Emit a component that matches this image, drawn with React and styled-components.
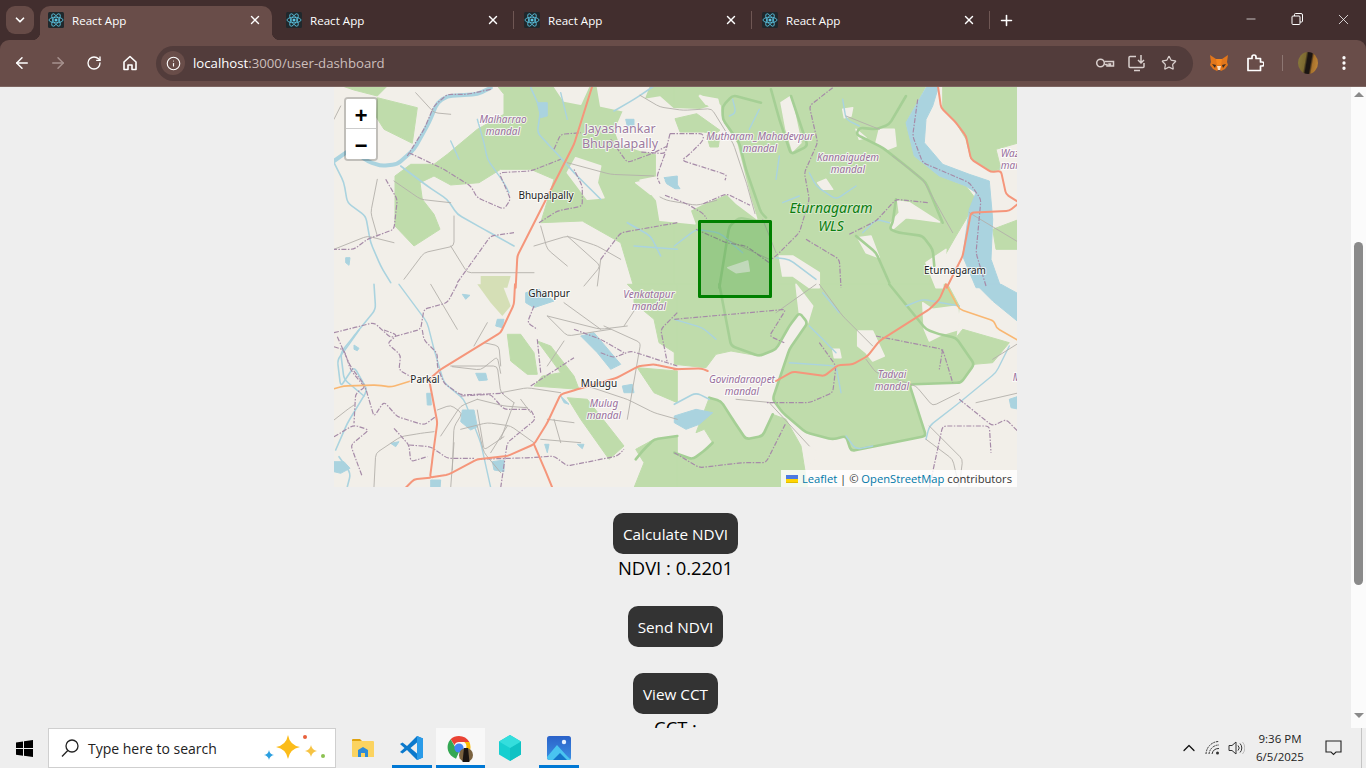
import React from "react";
import styled, { createGlobalStyle } from "styled-components";
import { ArrowLeft, ArrowRight, RotateCw, Info, Star, X, Plus, Minus, ChevronDown, ChevronUp, EllipsisVertical } from "lucide-react";

const GlobalStyle = createGlobalStyle`
  html, body { margin: 0; height: 100%; overflow: hidden; }
  * { box-sizing: border-box; }
`;

const UI_FONT = `"Open Sans", "Noto Sans", sans-serif`;

/* ---------- map data, traced from crops of the map at 3x ---------- */
const NW = [334, 86];
const NE = [676, 86];
const SW = [334, 286];
const SE = [676, 286];
const MID = [640, 87];
const LOW = [334, 330];

const pts = (o, s) =>
  s.trim().split(/\s+/).map((p) => {
    const [x, y] = p.split(",").map(Number);
    return [o[0] + x / 3, o[1] + y / 3];
  });
const poly = (o, s) => "M" + pts(o, s).map((p) => p[0].toFixed(1) + " " + p[1].toFixed(1)).join("L") + "Z";

// polyline with its corners rounded off by a few pixels
const curve = (o, s, r = 4) => {
  const a = pts(o, s);
  const toward = (p, q) => {
    const len = Math.hypot(q[0] - p[0], q[1] - p[1]) || 1;
    const t = Math.min(r, len / 2) / len;
    return [p[0] + (q[0] - p[0]) * t, p[1] + (q[1] - p[1]) * t];
  };
  let d = `M${a[0][0].toFixed(1)} ${a[0][1].toFixed(1)}`;
  for (let i = 1; i < a.length - 1; i++) {
    const b = toward(a[i], a[i - 1]);
    const c = toward(a[i], a[i + 1]);
    d += `L${b[0].toFixed(1)} ${b[1].toFixed(1)}Q${a[i][0].toFixed(1)} ${a[i][1].toFixed(1)} ${c[0].toFixed(1)} ${c[1].toFixed(1)}`;
  }
  const e = a[a.length - 1];
  return d + `L${e[0].toFixed(1)} ${e[1].toFixed(1)}`;
};

const forests = [
  [NW, "130,35 250,65 235,172 150,130 128,95"],
  [NW, "25,0 160,0 130,30 60,12"],
  [NW, "183,270 183,420 240,480 318,430 300,385 265,340 258,290 300,270 350,297 435,290 500,250 590,250 660,280 620,410 745,405 860,470 900,605 1030,605 1030,0 490,0 510,25 510,85 430,130 340,205 300,235 230,235"],
  [NE, "-5,0 750,0 690,110 715,210 790,270 870,300 900,340 870,400 840,450 800,520 790,605 -5,605"],
  [NE, "800,0 1030,0 1030,170 960,190 975,250 945,255 885,220 870,160 840,110 800,70"],
  [NE, "950,430 1030,400 1030,490 960,490"],
  [SE, "-5,-5 815,-5 850,60 840,155 895,235 855,290 700,295 750,450 525,495 510,450 470,460 390,440 320,380 290,340 340,190 395,110 370,80 340,120 300,190 250,210 165,195 120,205 90,245 -5,235"],
  [SE, "840,155 860,130 1000,170 950,230 895,235"],
  [SE, "100,335 135,345 170,400 210,460 260,450 290,385 330,400 375,480 395,605 -5,605 -5,500 50,520 90,490 110,470 85,430 60,440"],
  [SW, "880,-5 1030,-5 1030,205 975,170 960,100 900,50 900,15"],
  [SW, "910,245 1030,255 1030,350 960,320"],
  [SW, "905,490 960,460 1030,450 1030,605 900,605 930,530"],
  [SW, "520,145 560,145 600,200 610,265 580,265 530,225"],
  [SW, "610,165 650,180 720,270 735,310 600,300 625,270 680,260"],
  [SW, "700,335 760,340 870,480 825,520 740,400"],
];

const clearings = [
  [NW, "660,0 765,0 740,55 690,45"],
  [NW, "790,0 945,0 930,40 870,75 800,60"],
  [NW, "725,215 800,240 790,290 810,335 760,340 700,260"],
  [NW, "905,290 960,280 1030,310 1030,322 950,325"],
  [MID, "-75,130 -40,50 0,40 60,30 100,65 180,68 210,60 180,25 240,55 245,100 290,170 300,210 330,330 350,395 290,350 260,320 190,350 150,370 165,410 60,400 50,340 0,280 50,270 50,200 0,190 -60,170"],
  [NE, "70,30 125,40 130,60 90,55"],
  [NE, "315,50 345,30 375,170 350,195 330,130"],
  [NE, "500,70 530,65 525,90 505,95"],
  [NE, "425,290 450,280 470,310 440,310"],
  [NE, "540,130 570,155 550,160"],
  [NE, "610,130 655,130 660,180 635,190 600,170"],
  [NE, "665,345 700,350 790,408 730,400 690,395 650,430 645,410 670,380"],
  [NE, "545,455 585,450 610,515 570,500"],
  [NE, "310,510 350,510 430,560 430,605 400,605 350,570 320,570"],
  [NE, "750,530 810,490 800,605 780,605"],
  [NE, "155,545 215,525 220,555 180,560"],
  [SE, "360,-5 410,60 395,110 370,80 365,40"],
  [SE, "545,135 590,135 625,210 590,225 570,200 545,180"],
  [SE, "740,50 770,70 845,60 850,130 800,145 760,165 745,130"],
  [SE, "470,190 490,190 495,215 475,215"],
  [SE, "400,480 420,490 415,540 395,530"],
];

const groves = [
  [MID, "105,95 170,80 240,130 225,140 190,135 120,135"],
  [MID, "200,145 240,145 235,180 210,180"],
];

const meadows = [
  [SW, "430,-5 505,-5 530,60 505,90 470,50"],
  [NW, "440,570 530,570 520,605 440,605"],
];

const lakes = [
  [NE, "750,5 765,-5 790,-5 770,60 750,100 745,170 800,235 880,265 940,285 950,400 945,520 975,605 900,605 860,510 880,370 900,320 870,300 790,270 715,210 690,110"],
  [SE, "900,-5 975,-5 1030,25 1030,110 950,45"],
  [SE, "1000,340 1030,330 1030,370 1005,365"],
  [SE, "-5,390 60,370 110,380 70,415 30,430 -5,410"],
  [SW, "575,20 615,10 660,45 600,65 575,50"],
  [SW, "740,150 780,140 860,235 830,250 790,200"],
  [SW, "865,300 895,295 900,320 870,320"],
  [SW, "680,330 705,355 690,350"],
  [SW, "490,100 510,100 505,125 485,120"],
  [SW, "385,25 408,28 395,40"],
  [SW, "730,475 750,475 745,488"],
  [SW, "632,475 645,475 640,500"],
  [NW, "610,50 640,50 640,90 620,95"],
  [NW, "875,100 900,100 900,120 880,120"],
  [NW, "990,275 1030,270 1030,295 1000,290"],
  [NW, "35,515 48,515 45,538 35,530"],
  [MID, "75,280 100,275 120,305 105,305 80,290"],
  [LOW, "60,45 75,55 70,62 60,58"],
  [LOW, "0,395 30,395 48,415 20,430 0,425"],
  [LOW, "385,240 420,240 430,290 410,300 380,275"],
  [LOW, "425,130 455,130 460,150 435,152"],
  [LOW, "278,190 290,190 292,225 280,225"],
  [LOW, "475,395 510,390 510,425 480,420"],
  [LOW, "290,450 320,450 318,475 290,475"],
  [LOW, "170,340 195,335 185,350"],
];

const rivers = [
  [NW, "470,5 430,25 340,30 310,50 285,110 240,190 190,235 140,240 100,225 50,190 0,225", 4],
  [NW, "0,230 30,290 40,350 95,390 110,470 140,540 170,590", 1.6],
  [NW, "200,240 280,300 340,340 370,385 450,430 540,480", 1.6],
  [NW, "590,5 620,70 610,140 680,215 720,260 760,300 800,340", 1.6],
  [NW, "430,100 450,170 460,220 510,290 525,320", 1.4],
  [NW, "880,410 950,450 980,510", 1.6],
  [NW, "900,480 1030,490", 1.4],
  [NW, "680,20 700,100", 1.4],
  [NW, "840,75 900,40 960,0", 1.6],
  [NW, "350,165 375,220", 1.4],
  [SW, "120,-5 125,70 60,150 20,200 30,280 90,330", 1.6],
  [SW, "195,-5 280,110 300,190 330,290 390,340 440,470 470,605", 1.4],
  [LOW, "75,0 40,50 10,90 20,170 60,110 100,180 40,280 5,360", 1.6],
  [LOW, "15,380 50,430 40,470", 1.6],
  [NE, "-5,480 60,430 130,440 200,500", 1.4],
  [NE, "300,515 340,520 420,580", 1.6],
  [NE, "170,40 180,80 160,90", 1.4],
  [NE, "250,70 220,130", 1.4],
  [NE, "310,210 300,280", 1.4],
  [NE, "400,260 420,300 480,340 540,300", 1.4],
  [NE, "370,330 320,350", 1.4],
  [NE, "500,40 510,100 550,120", 1.4],
  [NE, "640,410 600,400 560,440", 1.4],
  [SE, "-5,100 80,125 120,160", 1.4],
  [SE, "400,120 450,170 480,200", 1.4],
  [SE, "340,230 480,240 495,320", 1.4],
  [SE, "440,20 490,80", 1.4],
  [SE, "850,60 740,40 690,60", 1.4],
  [SE, "100,340 60,320 -5,355", 1.6],
  [SE, "1000,180 960,260 850,350 760,420 750,460", 1.4],
  [SE, "510,450 540,490 590,480", 1.4],
];

const minorRoads = [
  [SW, "290,-5 370,130"], [SW, "460,110 420,180"], [SW, "350,240 490,240 500,320 540,350"],
  [SW, "640,90 800,130 880,120"], [SW, "690,50 800,130"], [SW, "500,320 580,305 680,320"],
  [SW, "380,430 460,410 530,420 600,470"], [SW, "320,450 380,360 430,340"],
  [SW, "620,460 740,470"], [SW, "640,400 720,410"], [SW, "810,120 920,170 880,400"],
  [SW, "640,90 700,150 830,130"], [SW, "690,165 640,240"], [SW, "870,120 910,60"],
  [SW, "430,340 510,360 580,365"], [SW, "500,240 495,180 450,170"], [SW, "520,420 470,500"],
  [SW, "560,340 590,380"], [SW, "660,400 680,470"], [SW, "760,300 880,340 960,380 1030,400"],
  [SW, "430,420 450,500 500,560"], [SW, "360,470 350,605"], [SW, "540,350 500,460"],
  [NW, "180,285 260,340 350,350"], [NW, "210,580 270,500 360,480 360,390"], [NW, "0,490 100,450 180,470"],
  [NW, "600,480 700,450 790,480 860,520"], [NW, "620,420 640,490 700,540"], [NW, "700,230 830,265 960,270"],
  [NW, "130,280 110,380 130,450"], [NW, "800,520 790,600"], [NW, "0,100 20,60"],
  [NW, "350,480 400,560 600,560"], [NW, "700,450 800,540 750,600"], [NW, "245,20 300,80 350,85"],
  [LOW, "0,270 45,235 60,225"], [LOW, "120,470 125,370 200,320 260,310 300,305"],
  [LOW, "355,110 440,120 490,80 500,130"], [LOW, "310,240 350,225 385,250 360,290 355,420"],
  [LOW, "430,240 440,300 450,360 510,320"],
  [MID, "0,25 60,60 130,70 215,65 280,170 320,290 345,380"], [MID, "60,330 80,340 170,355 230,340"],
  [NE, "510,90 610,130"], [NE, "650,210 740,280 830,440"],
  [NE, "260,400 300,500"], [NE, "150,460 280,520"], [NE, "880,380 1030,470"],
  [SE, "430,-5 500,90 590,180"], [SE, "570,220 600,260 720,300 770,360 850,320"], [SE, "280,350 400,480"],
  [SE, "180,340 290,350"], [SE, "1030,170 950,220"], [SE, "750,460 830,520 850,605"],
  [SE, "420,-5 300,80"], [SE, "900,350 1030,320"], [SE, "760,420 860,520 850,600"],
];

const boundaries = [
  [NW, "470,10 400,25 340,25 300,60 270,130 220,210"],
  [NW, "225,200 330,250 410,300 430,335 510,370 530,340 495,260 590,255 680,220"],
  [NW, "155,280 190,340 180,430 100,460 60,490 0,490"],
  [NW, "660,190 680,145 740,140"],
  [NW, "615,410 670,375 745,360 745,300 720,250"],
  [NW, "800,520 860,440 1030,410"],
  [NW, "370,590 470,450 540,440"],
  [NW, "830,160 880,230 960,200 1000,180"],
  [SW, "0,140 60,125 120,110 170,155 260,130 270,70 340,50 370,-5"],
  [SW, "380,330 470,325 510,370 590,370 605,400 520,470 500,605"],
  [SW, "430,520 590,515 660,510 700,540 850,510 870,490"],
  [SW, "600,60 580,110 610,130"],
  [SW, "610,160 620,260"],
  [SW, "800,200 840,215 890,195 1030,240"],
  [SW, "1030,80 980,130 1000,230"],
  [SW, "720,130 800,160 870,200"],
  [SW, "590,300 720,215"],
  [LOW, "10,20 50,110 95,170 65,190 60,280"],
  [LOW, "0,50 30,60 50,120 95,175 120,260 150,215 190,260 270,285 305,260"],
  [LOW, "150,0 190,15 160,40 200,75 195,120 230,140"],
  [LOW, "265,0 270,30 310,70 310,110 330,160 380,195 510,190"],
  [LOW, "0,320 60,285 105,300 50,345 85,440"],
  [LOW, "180,295 225,345 230,395 280,380"],
  [LOW, "225,345 290,350 340,385 420,385"],
  [MID, "90,140 190,140 190,160 150,200 125,220 250,260 260,265 255,280"],
  [MID, "90,140 75,200 0,195"],
  [MID, "75,200 50,270 60,290"],
  [MID, "75,325 140,350 190,380 200,395"],
  [MID, "190,350 260,320 330,355"],
  [NE, "470,5 400,60 425,170 385,260 400,340 370,440 300,510 285,520"],
  [NE, "390,460 490,520 495,605"],
  [NE, "520,445 600,405 660,340 760,350"],
  [NE, "60,430 150,470 210,480 280,530"],
  [NE, "725,40 710,150 740,230 880,290 915,340 900,500 930,600"],
  [SE, "-5,100 330,70 280,150 325,170"],
  [SE, "430,170 480,240 470,320 400,350 270,350"],
  [SE, "600,150 800,190 830,290"],
  [SE, "800,190 790,250"],
  [SE, "-5,500 70,545 200,530 270,530 330,410"],
  [SE, "760,605 800,420 940,420 945,500"],
  [SE, "850,340 950,420 990,400 1030,440"],
];

const reserveEdges = [
  [NE, "255,50 170,28 140,60 140,100 190,170 210,250 255,380 270,395"],
  [NE, "285,10 310,100 345,205 395,180 345,30"],
  [NE, "690,30 640,115 600,130 550,125 540,145 570,160 620,185 690,240 750,290 800,410"],
  [NE, "660,340 650,410 640,430 670,440 740,450 770,490 775,540"],
  [NE, "540,450 600,500 640,590"],
  [NE, "130,605 160,420 190,395 240,405"],
  [SE, "130,-5 165,180 250,210 300,190 340,120 370,80 395,110 340,190 290,340 320,380 390,440 470,460 510,450 525,495 750,450 700,295 855,290 895,235 840,155 790,145 750,130 640,-5"],
  [SE, "100,335 135,345 170,400 210,460 260,450 290,385"],
  [SE, "-5,500 50,520 90,490 110,470"],
  [SW, "905,520 930,490 960,460 1030,450"],
];

const highways = [
  [NW, "775,0 720,175 550,510 545,605"],
  [SW, "543,-5 540,55 500,140 320,250 285,280 310,410 295,520 288,575 345,565 430,520 520,510 600,475 640,410 680,325 730,310 850,275 915,240 960,235 1030,250"],
  [SE, "-5,250 75,247 95,255"],
  [SE, "300,285 350,257 445,270 485,238 530,235 575,210 610,165 760,70 790,40 810,-5"],
  [SW, "600,475 630,545 655,605"],
  [SW, "288,575 240,580 215,605"],
  [NE, "812,605 860,510 885,380 1000,375 1030,350"],
  [NE, "785,-5 795,65 840,110 870,150 885,220 945,258 975,255 990,325 1030,350"],
];

const sideRoads = [
  [SW, "-5,310 30,300 130,297 170,303 230,285"],
  [SE, "810,-5 850,70 955,105 960,125 1030,165"],
];

const mandals = [
  ["Malharrao", 503, 123], ["mandal", 503, 135],
  ["Mutharam_Mahadevpur", 760, 140], ["mandal", 760, 152],
  ["Kannaigudem", 848, 161], ["mandal", 848, 173],
  ["Venkatapur", 649, 298], ["mandal", 649, 310],
  ["Mulug", 604, 407], ["mandal", 604, 419],
  ["Govindaraopet", 742, 383], ["mandal", 742, 395],
  ["Tadvai", 892, 378], ["mandal", 892, 390],
  ["Waz", 1010, 157], ["mar", 1010, 169], ["M", 1017, 381],
];

const towns = [
  ["Bhupalpally", 546, 199], ["Eturnagaram", 955, 274], ["Ghanpur", 549, 297],
  ["Parkal", 425, 383], ["Mulugu", 599, 387],
];

/* ---------- browser chrome ---------- */
const Screen = styled.div`
  width: 1366px;
  height: 768px;
  display: flex;
  flex-direction: column;
  overflow: hidden;
  background: #422e2e;
  font-family: ${UI_FONT};
`;

const TabStrip = styled.div`
  height: 40px;
  display: flex;
  align-items: flex-end;
  padding-left: 6px;
  color: #fff;
`;

const TabMenu = styled.div`
  width: 28px;
  height: 28px;
  margin: 0 6px 6px 0;
  border-radius: 9px;
  background: #664b47;
  display: flex;
  align-items: center;
  justify-content: center;
`;

const Tab = styled.div`
  position: relative;
  width: 232px;
  height: 34px;
  padding: 0 10px 6px 8px;
  display: flex;
  align-items: center;
  gap: 8px;
  border-radius: 10px 10px 0 0;
  background: ${(p) => (p.$active ? "#694d49" : "transparent")};
  ${(p) =>
    p.$active &&
    `
    &::before, &::after {
      content: "";
      position: absolute;
      bottom: 0;
      width: 8px;
      height: 8px;
    }
    &::before { left: -8px; background: radial-gradient(circle at 0 0, transparent 8px, #694d49 8.5px); }
    &::after { right: -8px; background: radial-gradient(circle at 100% 0, transparent 8px, #694d49 8.5px); }
  `}
`;

const TabTitle = styled.span`
  flex: 1;
  font-size: 11.6px;
  white-space: nowrap;
`;

const TabGap = styled.div`
  width: 6px;
  height: 34px;
  padding-bottom: 6px;
  display: flex;
  align-items: center;
  justify-content: center;
  &::after {
    content: "";
    width: 1px;
    height: 18px;
    background: ${(p) => (p.$line ? "#6f5754" : "transparent")};
  }
`;

const NewTab = styled.div`
  width: 28px;
  height: 34px;
  padding-bottom: 6px;
  display: flex;
  align-items: center;
  justify-content: center;
`;

const WindowControls = styled.div`
  margin-left: auto;
  height: 40px;
  display: flex;
`;

const WindowButton = styled.div`
  width: 46px;
  height: 38px;
  display: flex;
  align-items: center;
  justify-content: center;
`;

const Toolbar = styled.div`
  height: 47px;
  padding: 0 4px;
  display: flex;
  align-items: center;
  border-radius: 9px 9px 0 0;
  background: #694d49;
  border-bottom: 1px solid #7d6561;
  color: #fff;
`;

const NavButton = styled.div`
  width: 36px;
  height: 36px;
  display: flex;
  align-items: center;
  justify-content: center;
  color: ${(p) => (p.$dim ? "#a6918e" : "#fff")};
`;

const Omnibox = styled.div`
  flex: 1;
  height: 35px;
  margin: 0 8px;
  padding: 0 8px 0 5px;
  display: flex;
  align-items: center;
  border-radius: 18px;
  background: #523c3b;
`;

const SiteChip = styled.div`
  width: 24px;
  height: 24px;
  border-radius: 50%;
  background: #694d49;
  display: flex;
  align-items: center;
  justify-content: center;
`;

const Url = styled.div`
  flex: 1;
  margin-left: 8px;
  font-size: 13.2px;
  color: #fff;
  span {
    color: #cdbfbc;
  }
`;

const OmniAction = styled.div`
  width: 32px;
  height: 24px;
  display: flex;
  align-items: center;
  justify-content: center;
  color: #d9cfcd;
`;

const ToolbarDivider = styled.div`
  width: 1px;
  height: 16px;
  margin: 0 7px 0 9px;
  background: #8d7672;
`;

const Avatar = styled.div`
  width: 20px;
  height: 22px;
  border-radius: 50%;
  overflow: hidden;
  background: linear-gradient(100deg, #8a7a3c 0%, #7d6a30 35%, #1b1512 45%, #1b1512 60%, #a8722c 70%, #c48a3a 100%);
`;

/* ---------- page ---------- */
const Viewport = styled.div`
  flex: 1;
  min-height: 0;
  display: flex;
  background: #eeeeee;
`;

const Page = styled.main`
  flex: 1;
  min-width: 0;
  overflow: hidden;
  display: flex;
  flex-direction: column;
  align-items: center;
  font-family: "Open Sans", sans-serif;
  color: #000;
`;

const MapFrame = styled.div`
  position: relative;
  flex: none;
  width: 683px;
  height: 400px;
  overflow: hidden;
  background: #f2efe9;
`;

const MapCanvas = styled.svg`
  display: block;
  width: 683px;
  height: 400px;
`;

const Tiles = styled.g`
  filter: blur(0.35px);
`;

const Forest = styled.path`
  fill: #bfdcab;
  stroke: #bfdcab;
  stroke-width: 1;
  stroke-linejoin: round;
`;

const Clearing = styled.path`
  fill: #f2efe9;
  stroke: #f2efe9;
  stroke-width: 1.5;
  stroke-linejoin: round;
`;

const Meadow = styled.path`
  fill: #d5dfb6;
`;

const Lake = styled.path`
  fill: #aad3df;
  stroke: #aad3df;
  stroke-width: 1;
  stroke-linejoin: round;
`;

const Line = styled.path`
  fill: none;
  stroke-linecap: round;
  stroke-linejoin: round;
`;

const River = styled(Line)`
  stroke: #aad3df;
`;

const MinorRoad = styled(Line)`
  stroke: #b3b0aa;
  stroke-width: 0.9;
`;

const AdminLine = styled(Line)`
  stroke: #a68ba8;
  stroke-width: 1.2;
  stroke-dasharray: 5 1.5 1.5 1.5;
  stroke-linecap: butt;
`;

const ReserveEdge = styled(Line)`
  stroke: #a5cf95;
  stroke-width: 2.6;
`;

const Highway = styled(Line)`
  stroke: #f5967b;
  stroke-width: 2;
`;

const SideRoad = styled(Line)`
  stroke: #f9b772;
  stroke-width: 1.6;
`;

const Selection = styled.rect`
  fill: #008000;
  fill-opacity: 0.2;
  stroke: #008000;
  stroke-width: 3;
  stroke-linejoin: round;
`;

const MapLabel = styled.text`
  font-family: "Noto Sans", sans-serif;
  text-anchor: middle;
  paint-order: stroke;
  stroke: rgba(255, 255, 255, 0.75);
  stroke-width: 2px;
  stroke-linejoin: round;
`;

const MandalLabel = styled(MapLabel)`
  font-size: 10px;
  font-style: italic;
  fill: #996f9c;
`;

const DistrictLabel = styled(MapLabel)`
  font-size: 12.5px;
  fill: #9d7aa0;
`;

const TownLabel = styled(MapLabel)`
  font-size: 10px;
  fill: #222;
`;

const ReserveLabel = styled(MapLabel)`
  font-size: 14px;
  font-style: italic;
  fill: #0b7d10;
  stroke: rgba(255, 255, 255, 0.35);
`;

const ZoomBar = styled.div`
  position: absolute;
  top: 10px;
  left: 10px;
  border: 2px solid rgba(0, 0, 0, 0.2);
  border-radius: 4px;
  background-clip: padding-box;
`;

const ZoomButton = styled.div`
  width: 30px;
  height: 30px;
  padding-top: 7px;
  background: #fff;
  border-bottom: ${(p) => (p.$last ? "none" : "1px solid #ccc")};
  border-radius: ${(p) => (p.$last ? "0 0 2px 2px" : "2px 2px 0 0")};
  display: flex;
  align-items: center;
  justify-content: center;
  font: bold 22px "Liberation Mono", monospace;
  color: #000;
`;

const Attribution = styled.div`
  position: absolute;
  right: 0;
  bottom: 0;
  height: 17px;
  padding: 0 5px;
  display: flex;
  align-items: center;
  background: rgba(255, 255, 255, 0.8);
  font-size: 11.2px;
  color: #333;
  white-space: pre;
  a {
    color: #0078a8;
    text-decoration: none;
  }
`;

const ActionButton = styled.button`
  flex: none;
  height: 41px;
  margin-top: ${(p) => p.$gap}px;
  padding: 0 10px;
  border: none;
  border-radius: 10px;
  background: #333333;
  color: #fff;
  font-family: inherit;
  font-size: 15.3px;
`;

const Reading = styled.div`
  flex: none;
  height: 28px;
  line-height: 28px;
  font-size: 18.4px;
`;

const ScrollTrack = styled.div`
  flex: none;
  width: 15px;
  padding-top: 5px;
  display: flex;
  flex-direction: column;
  align-items: center;
  background: #fbfbfb;
`;

const ScrollArrow = styled.div`
  width: 0;
  height: 0;
  border-left: 5px solid transparent;
  border-right: 5px solid transparent;
  ${(p) => (p.$down ? "border-top: 5px solid #8a8a8a;" : "border-bottom: 5px solid #8a8a8a;")}
`;

const ScrollThumb = styled.div`
  width: 9px;
  height: 343px;
  margin: 145px 0 128px;
  border-radius: 5px;
  background: #8a8a8a;
`;

/* ---------- taskbar ---------- */
const Taskbar = styled.footer`
  flex: none;
  height: 40px;
  display: flex;
  align-items: stretch;
  background: #eeeeee;
  color: #111;
`;

const StartButton = styled.div`
  width: 48px;
  display: flex;
  align-items: center;
  justify-content: center;
`;

const SearchBox = styled.div`
  width: 288px;
  padding: 0 7px 0 11px;
  display: flex;
  align-items: center;
  gap: 8px;
  background: #fff;
  border: 1px solid #cfcfcf;
  font-size: 14px;
  color: #222;
`;

const SearchText = styled.span`
  flex: 1;
  white-space: nowrap;
`;

const AppList = styled.div`
  margin-left: 2px;
  display: flex;
`;

const AppSlot = styled.div`
  position: relative;
  width: 49px;
  display: flex;
  align-items: center;
  justify-content: center;
  background: ${(p) => (p.$focused ? "#f8f8f8" : "transparent")};
  ${(p) =>
    p.$running &&
    `
    &::after {
      content: "";
      position: absolute;
      bottom: 0;
      height: 3px;
      left: ${p.$focused ? "0" : "5px"};
      right: ${p.$focused ? "0" : "4px"};
      background: #0078d4;
    }
  `}
`;

const Tray = styled.div`
  margin-left: auto;
  display: flex;
  align-items: center;
`;

const TraySlot = styled.div`
  width: ${(p) => p.$w}px;
  display: flex;
  align-items: center;
  justify-content: center;
`;

const Clock = styled.div`
  width: 66px;
  text-align: center;
  font-size: 11.5px;
  line-height: 18px;
  color: #222;
`;

const ShowDesktop = styled.div`
  width: 5px;
  height: 100%;
  margin-left: 8px;
  border-left: 1px solid #c4c4c4;
`;

/* ---------- small drawings ---------- */
const ReactFavicon = () => (
  <svg width="16" height="16" viewBox="0 0 16 16">
    <rect width="16" height="16" rx="1.5" fill="#20282c" />
    <g fill="none" stroke="#5cc8e6" strokeWidth="0.8">
      <ellipse cx="8" cy="8" rx="7" ry="2.8" />
      <ellipse cx="8" cy="8" rx="7" ry="2.8" transform="rotate(60 8 8)" />
      <ellipse cx="8" cy="8" rx="7" ry="2.8" transform="rotate(120 8 8)" />
    </g>
    <circle cx="8" cy="8" r="1.5" fill="#5cc8e6" />
  </svg>
);

const RestoreIcon = () => (
  <svg width="12" height="12" viewBox="0 0 12 12" fill="none" stroke="#fff" strokeWidth="1">
    <rect x="1" y="3" width="8" height="8.5" rx="1" />
    <path d="M3.5 3V1.5a1 1 0 0 1 1-1H10a1.5 1.5 0 0 1 1.5 1.5v6a1 1 0 0 1-1 1H9" />
  </svg>
);

const HomeIcon = () => (
  <svg width="16" height="16" viewBox="0 0 16 16" fill="none" stroke="#fff" strokeWidth="1.6" strokeLinejoin="round">
    <path d="M2 7l6-5.5L14 7v7.5h-4V10H6v4.5H2z" />
  </svg>
);

const KeyIcon = () => (
  <svg width="20" height="14" viewBox="0 0 20 14" fill="none" stroke="currentColor" strokeWidth="1.5">
    <circle cx="5.5" cy="7" r="3.8" />
    <path d="M9.5 5.5h9v4.5h-3V8h-1.500v2h-2V8.500H9.500" />
  </svg>
);

const InstallIcon = () => (
  <svg width="18" height="18" viewBox="0 0 18 18" fill="none" stroke="currentColor" strokeWidth="1.5">
    <path d="M8 2.500H2a1 1 0 0 0-1 1v9a1 1 0 0 0 1 1h13a1 1 0 0 0 1-1V9" />
    <path d="M6 16.500h6M13 1v7.500M10 6l3 3 3-3" />
  </svg>
);

const FoxIcon = () => (
  <svg width="20" height="18" viewBox="0 0 20 18">
    <path d="M1 1l6 4h6l6-4-1 7 1 3-3 4-4 2-1-1H9l-1 1-4-2-3-4 1-3z" fill="#e2761b" />
    <path d="M3 10l4 1-1 3zM17 10l-4 1 1 3z" fill="#3b2a20" />
    <path d="M8 12h4l-1 4H9z" fill="#f6e0c8" />
    <path d="M7 5h6l-1 6H8z" fill="#f6851b" />
  </svg>
);

const PuzzleIcon = () => (
  <svg width="18" height="18" viewBox="0 0 18 18" fill="none" stroke="#fff" strokeWidth="1.7" strokeLinejoin="round">
    <path d="M2 4.500h4V3a2 2 0 0 1 4 0v1.500h4.500V8H16a2 2 0 0 1 0 4h-1.500v4.500H2z" />
  </svg>
);

const WindowsLogo = () => (
  <svg width="17" height="17" viewBox="0 0 17 17" fill="#000">
    <path d="M0 2.400l7-1v6.700H0zM8 1.300L17 0v8.100H8zM0 9h7v6.700l-7-1zM8 9h9v8l-9-1.300z" />
  </svg>
);

const SearchGlyph = () => (
  <svg width="20" height="20" viewBox="0 0 20 20" fill="none" stroke="#222" strokeWidth="1.3">
    <circle cx="12" cy="8" r="6" />
    <path d="M7.800 12.500L2 18.500" />
  </svg>
);

const star = (c, m, r) =>
  `M${c} ${m - r}Q${c + r * 0.15} ${m - r * 0.15} ${c + r} ${m}Q${c + r * 0.15} ${m + r * 0.15} ${c} ${m + r}Q${c - r * 0.15} ${m + r * 0.15} ${c - r} ${m}Q${c - r * 0.15} ${m - r * 0.15} ${c} ${m - r}Z`;

const Sparkles = () => (
  <svg width="66" height="32" viewBox="0 0 66 32">
    <path d={star(26, 15, 12)} fill="#fbbc1a" />
    <path d={star(49, 19, 6)} fill="#f6c343" />
    <path d={star(7, 23, 5)} fill="#2a9fe0" />
    <circle cx="43" cy="5" r="2" fill="#e8603c" />
    <circle cx="61" cy="24" r="2" fill="#8cc152" />
  </svg>
);

const ExplorerIcon = () => (
  <svg width="22" height="20" viewBox="0 0 22 20">
    <path d="M0 2a1 1 0 0 1 1-1h7l2 2H0z" fill="#e0a30f" />
    <path d="M0 3h21a1 1 0 0 1 1 1v15H1a1 1 0 0 1-1-1z" fill="#fbd360" />
    <path d="M6 12l5-3 5 3v7H13v-4H9v4H6z" fill="#2e8bd6" />
  </svg>
);

const VsCodeIcon = () => (
  <svg width="26" height="26" viewBox="0 0 26 26">
    <path d="M18 1L8 11 3.500 7.500 1 9l4.500 4L1 17l2.500 1.500L8 15l10 10 6-2.500V3.500zM18 7.500v11L11.500 13z" fill="#0b79cc" />
    <path d="M18 1l6 2.500v19L18 25z" fill="#2a9be8" />
  </svg>
);

const ChromeIcon = () => (
  <svg width="27" height="27" viewBox="0 0 27 27">
    <path d="M12 1a12 12 0 0 1 10.400 6H12a5 5 0 0 0-4.600 3L3.600 4.300A12 12 0 0 1 12 1z" fill="#ea4335" />
    <path d="M3.600 4.300L8.700 13a5 5 0 0 0 3.300 4l-3 6.700A12 12 0 0 1 3.600 4.300z" fill="#34a853" />
    <path d="M22.400 7a12 12 0 0 1-10 17l4.700-8.500a5 5 0 0 0 0-8.500z" fill="#fbbc05" />
    <circle cx="12" cy="13" r="4.600" fill="#4285f4" />
    <ellipse cx="19" cy="20" rx="7" ry="7" fill="#7a6240" />
    <path d="M17 13h4l1.500 14h-7z" fill="#1b1512" />
  </svg>
);

const CubeIcon = () => (
  <svg width="22" height="26" viewBox="0 0 22 26">
    <path d="M11 0l11 6.500v13L11 26 0 19.500v-13z" fill="#17cfd0" />
    <path d="M11 13l11-6.500v13L11 26z" fill="#0fc2c4" />
    <path d="M11 0l11 6.500L11 13 0 6.500z" fill="#34dedd" />
  </svg>
);

const PhotosIcon = () => (
  <svg width="24" height="24" viewBox="0 0 24 24">
    <defs>
      <linearGradient id="photosBg" x1="0" y1="0" x2="0" y2="1">
        <stop offset="0" stopColor="#2b62c9" />
        <stop offset="1" stopColor="#3a8fe3" />
      </linearGradient>
    </defs>
    <rect width="24" height="24" rx="2.500" fill="url(#photosBg)" />
    <circle cx="17" cy="6" r="2.200" fill="#e6f2ff" />
    <path d="M0 21L10 9l9 10 5 5H2.500A2.500 2.500 0 0 1 0 21z" fill="#49c4f0" />
    <path d="M6 24l7-7 7 7z" fill="#1576c9" />
  </svg>
);

const WifiIcon = () => (
  <svg width="16" height="16" viewBox="0 0 16 16" fill="none" stroke="#333" strokeWidth="1">
    <path d="M1 14A13 13 0 0 1 14 1.500" strokeDasharray="2 0.800" />
    <path d="M4 14A10 10 0 0 1 14 5" strokeDasharray="2 0.800" />
    <path d="M7 14a7 7 0 0 1 7-5.500" />
    <circle cx="12.500" cy="13" r="1.500" fill="#333" stroke="none" />
  </svg>
);

const VolumeIcon = () => (
  <svg width="17" height="16" viewBox="0 0 17 16" fill="none" stroke="#333" strokeWidth="1">
    <path d="M1 5.500h3L8 2v12L4 10.500H1z" />
    <path d="M10 5.500a3.500 3.500 0 0 1 0 5M12 3.500a6.500 6.500 0 0 1 0 9" />
    <path d="M14.500 2a9 9 0 0 1 0 12" stroke="#bbb" />
  </svg>
);

const ActionCenterIcon = () => (
  <svg width="17" height="16" viewBox="0 0 17 16" fill="none" stroke="#222" strokeWidth="1.100">
    <path d="M1 1h15v11h-5l-2.500 2.500L6 12H1z" />
  </svg>
);

const UkraineFlag = () => (
  <svg width="12" height="8" viewBox="0 0 12 8" style={{ marginRight: 4 }}>
    <path fill="#4C7BE1" d="M0 0h12v4H0z" />
    <path fill="#FFD500" d="M0 4h12v3H0z" />
    <path fill="#E0BC00" d="M0 7h12v1H0z" />
  </svg>
);

const MapArt = () => (
  <MapCanvas viewBox="334 87 683 400">
    <Tiles>
      {forests.map(([o, s], i) => <Forest key={i} d={poly(o, s)} />)}
      {clearings.map(([o, s], i) => <Clearing key={i} d={poly(o, s)} />)}
      {groves.map(([o, s], i) => <Forest key={i} d={poly(o, s)} />)}
      {meadows.map(([o, s], i) => <Meadow key={i} d={poly(o, s)} />)}
      {reserveEdges.map(([o, s], i) => <ReserveEdge key={i} d={curve(o, s, 4)} />)}
      {lakes.map(([o, s], i) => <Lake key={i} d={poly(o, s)} />)}
      {rivers.map(([o, s, w], i) => <River key={i} d={curve(o, s, 5)} strokeWidth={w} />)}
      {minorRoads.map(([o, s], i) => <MinorRoad key={i} d={curve(o, s)} />)}
      {boundaries.map(([o, s], i) => <AdminLine key={i} d={curve(o, s)} />)}
      {sideRoads.map(([o, s], i) => <SideRoad key={i} d={curve(o, s)} />)}
      {highways.map(([o, s], i) => <Highway key={i} d={curve(o, s, 3)} />)}
    </Tiles>
    <Selection x="699.5" y="221.5" width="71" height="75" />
    {mandals.map(([t, x, y], i) => <MandalLabel key={i} x={x} y={y}>{t}</MandalLabel>)}
    {towns.map(([t, x, y]) => <TownLabel key={t} x={x} y={y}>{t}</TownLabel>)}
    <DistrictLabel x="620" y="133">Jayashankar</DistrictLabel>
    <DistrictLabel x="620" y="148">Bhupalapally</DistrictLabel>
    <ReserveLabel x="831" y="213">Eturnagaram</ReserveLabel>
    <ReserveLabel x="831" y="231">WLS</ReserveLabel>
  </MapCanvas>
);

const tabs = [true, false, false, false];

export default function App() {
  return (
    <Screen>
      <GlobalStyle />
      <TabStrip>
        <TabMenu><ChevronDown size={14} strokeWidth={3} /></TabMenu>
        {tabs.map((active, i) => (
          <React.Fragment key={i}>
            <Tab $active={active}>
              <ReactFavicon />
              <TabTitle>React App</TabTitle>
              <X size={14} strokeWidth={2.4} />
            </Tab>
            <TabGap $line={i > 0} />
          </React.Fragment>
        ))}
        <NewTab><Plus size={17} strokeWidth={2.2} /></NewTab>
        <WindowControls>
          <WindowButton><Minus size={14} strokeWidth={1.2} /></WindowButton>
          <WindowButton><RestoreIcon /></WindowButton>
          <WindowButton><X size={17} strokeWidth={1.1} /></WindowButton>
        </WindowControls>
      </TabStrip>

      <Toolbar>
        <NavButton><ArrowLeft size={18} strokeWidth={2} /></NavButton>
        <NavButton $dim><ArrowRight size={18} strokeWidth={2} /></NavButton>
        <NavButton><RotateCw size={16} strokeWidth={2} /></NavButton>
        <NavButton><HomeIcon /></NavButton>
        <Omnibox>
          <SiteChip><Info size={15} strokeWidth={1.8} /></SiteChip>
          <Url>localhost<span>:3000/user-dashboard</span></Url>
          <OmniAction><KeyIcon /></OmniAction>
          <OmniAction><InstallIcon /></OmniAction>
          <OmniAction><Star size={16} strokeWidth={1.8} /></OmniAction>
        </Omnibox>
        <NavButton><FoxIcon /></NavButton>
        <NavButton><PuzzleIcon /></NavButton>
        <ToolbarDivider />
        <NavButton><Avatar /></NavButton>
        <NavButton><EllipsisVertical size={18} strokeWidth={2.4} /></NavButton>
      </Toolbar>

      <Viewport>
        <Page>
          <MapFrame>
            <MapArt />
            <ZoomBar>
              <ZoomButton>+</ZoomButton>
              <ZoomButton $last>−</ZoomButton>
            </ZoomBar>
            <Attribution>
              <UkraineFlag />
              <a>Leaflet</a> | © <a>OpenStreetMap</a> contributors
            </Attribution>
          </MapFrame>
          <ActionButton $gap={26}>Calculate NDVI</ActionButton>
          <Reading>NDVI : 0.2201</Reading>
          <ActionButton $gap={24}>Send NDVI</ActionButton>
          <ActionButton $gap={26}>View CCT</ActionButton>
          <Reading>CCT :</Reading>
        </Page>
        <ScrollTrack>
          <ScrollArrow />
          <ScrollThumb />
          <ScrollArrow $down />
        </ScrollTrack>
      </Viewport>

      <Taskbar>
        <StartButton><WindowsLogo /></StartButton>
        <SearchBox>
          <SearchGlyph />
          <SearchText>Type here to search</SearchText>
          <Sparkles />
        </SearchBox>
        <AppList>
          <AppSlot><ExplorerIcon /></AppSlot>
          <AppSlot $running><VsCodeIcon /></AppSlot>
          <AppSlot $running $focused><ChromeIcon /></AppSlot>
          <AppSlot><CubeIcon /></AppSlot>
          <AppSlot $running><PhotosIcon /></AppSlot>
        </AppList>
        <Tray>
          <TraySlot $w={24}><ChevronUp size={20} strokeWidth={1.5} /></TraySlot>
          <TraySlot $w={24}><WifiIcon /></TraySlot>
          <TraySlot $w={22}><VolumeIcon /></TraySlot>
          <Clock>9:36 PM<br />6/5/2025</Clock>
          <TraySlot $w={40}><ActionCenterIcon /></TraySlot>
          <ShowDesktop />
        </Tray>
      </Taskbar>
    </Screen>
  );
}
